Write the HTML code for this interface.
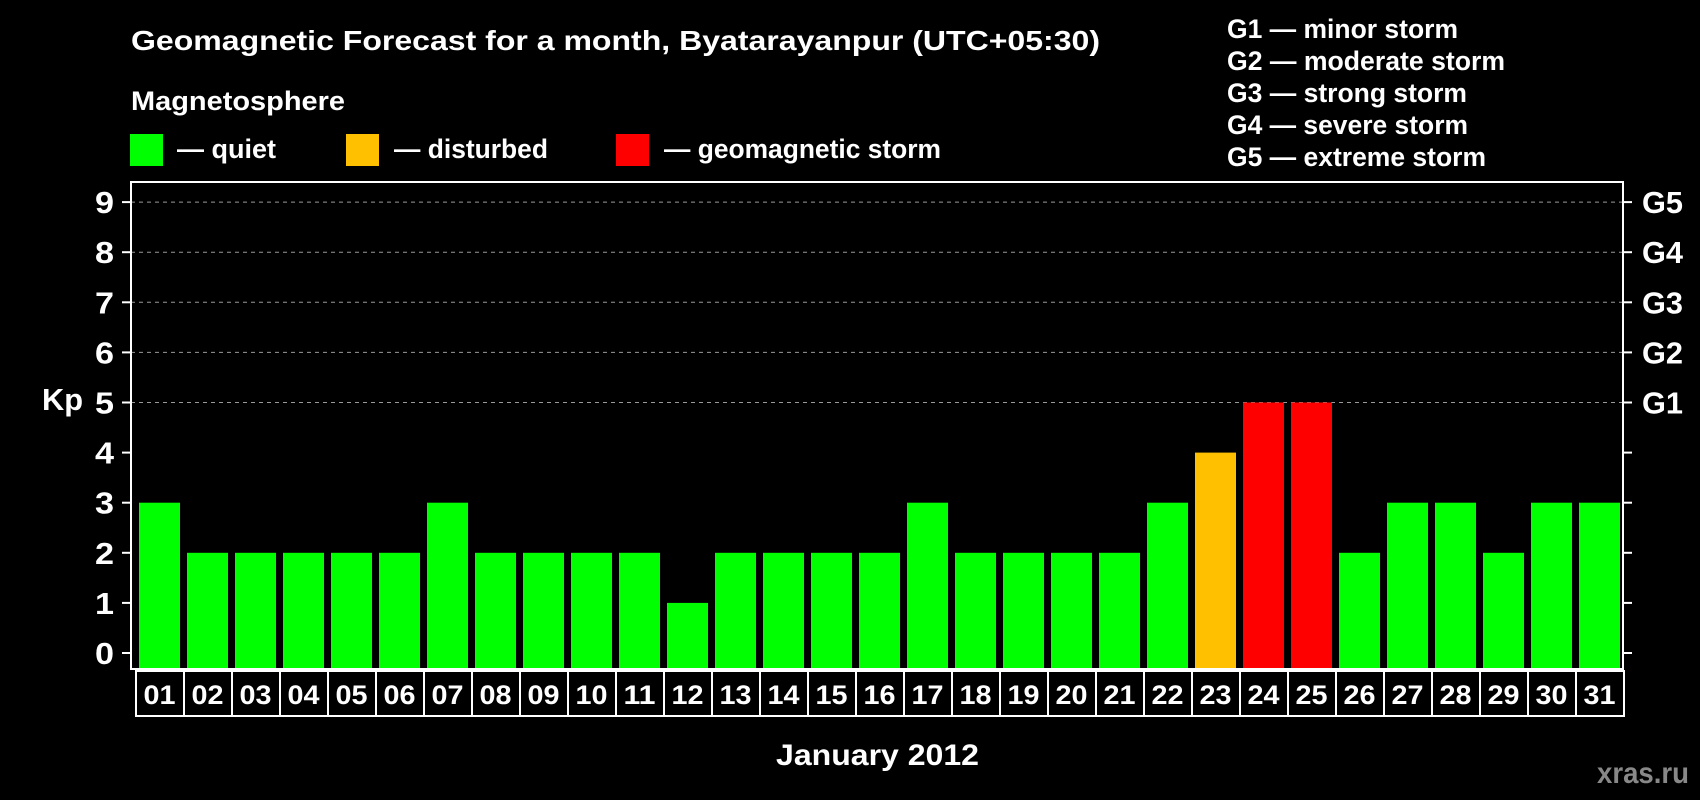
<!DOCTYPE html>
<html><head><meta charset="utf-8"><style>
html,body{margin:0;padding:0;background:#000;width:1700px;height:800px;overflow:hidden}
svg text{font-family:"Liberation Sans",Arial,sans-serif;font-weight:bold;fill:#fff}
</style></head><body>
<svg width="1700" height="800" xmlns="http://www.w3.org/2000/svg">
<text x="131" y="50" font-size="28" textLength="969" lengthAdjust="spacingAndGlyphs">Geomagnetic Forecast for a month, Byatarayanpur (UTC+05:30)</text>
<text x="131" y="110" font-size="27" textLength="214" lengthAdjust="spacingAndGlyphs">Magnetosphere</text>
<rect x="130" y="134" width="33" height="32" fill="#00ff00"/>
<text x="177" y="158" font-size="27" textLength="99" lengthAdjust="spacingAndGlyphs">— quiet</text>
<rect x="346" y="134" width="33" height="32" fill="#ffc000"/>
<text x="394" y="158" font-size="27" textLength="154" lengthAdjust="spacingAndGlyphs">— disturbed</text>
<rect x="616" y="134" width="33" height="32" fill="#ff0000"/>
<text x="664" y="158" font-size="27" textLength="277" lengthAdjust="spacingAndGlyphs">— geomagnetic storm</text>
<g font-size="27">
<text x="1227" y="38" textLength="231" lengthAdjust="spacingAndGlyphs">G1 — minor storm</text>
<text x="1227" y="70" textLength="278" lengthAdjust="spacingAndGlyphs">G2 — moderate storm</text>
<text x="1227" y="102" textLength="240" lengthAdjust="spacingAndGlyphs">G3 — strong storm</text>
<text x="1227" y="134" textLength="241" lengthAdjust="spacingAndGlyphs">G4 — severe storm</text>
<text x="1227" y="166" textLength="259" lengthAdjust="spacingAndGlyphs">G5 — extreme storm</text>
</g>
<g id="grid"></g>
<rect x="131" y="182" width="1492" height="487" fill="none" stroke="#fff" stroke-width="2"/>
<text x="42" y="410" font-size="31" textLength="41" lengthAdjust="spacingAndGlyphs">Kp</text>
<text x="776" y="765" font-size="30" textLength="203" lengthAdjust="spacingAndGlyphs">January 2012</text>
<text x="1597" y="783" font-size="30" textLength="92" lengthAdjust="spacingAndGlyphs" style="fill:#888">xras.ru</text>
<g id="dyn"></g>
</svg>
<script>
var ns="http://www.w3.org/2000/svg",g=document.getElementById('dyn'),gr=document.getElementById('grid');
function el(t,a,txt,p){var e=document.createElementNS(ns,t);for(var k in a)e.setAttribute(k,a[k]);if(txt!==undefined)e.textContent=txt;(p||g).appendChild(e);return e;}
function y(v){return 653-v*50.1;}
for(var i=0;i<=9;i++){
 var yy=y(i);
 if(i>=5) el('line',{x1:131,x2:1623,y1:yy,y2:yy,stroke:'#999','stroke-dasharray':'4,4','stroke-width':1},undefined,gr);
 el('line',{x1:122,x2:131,y1:yy,y2:yy,stroke:'#fff','stroke-width':2});
 el('line',{x1:1623,x2:1632,y1:yy,y2:yy,stroke:'#fff','stroke-width':2});
 el('text',{x:95,y:yy+11,'font-size':31,textLength:19,lengthAdjust:'spacingAndGlyphs'},String(i));
 if(i>=5) el('text',{x:1642,y:yy+11,'font-size':31,textLength:41,lengthAdjust:'spacingAndGlyphs'},'G'+(i-4));
}
var d=[3,2,2,2,2,2,3,2,2,2,2,1,2,2,2,2,3,2,2,2,2,3,4,5,5,2,3,3,2,3,3];
for(var j=0;j<31;j++){
 var v=d[j],x=139+j*48,c=v>=5?'#ff0000':(v==4?'#ffc000':'#00ff00');
 el('rect',{x:x,y:y(v),width:41,height:668-y(v),fill:c});
 el('rect',{x:136+j*48,y:671,width:48,height:45,fill:'none',stroke:'#fff','stroke-width':2});
 el('text',{x:x+20.5-16,y:704,'font-size':27,textLength:32,lengthAdjust:'spacingAndGlyphs'},(j<9?'0':'')+(j+1));
}
</script>
</body></html>
